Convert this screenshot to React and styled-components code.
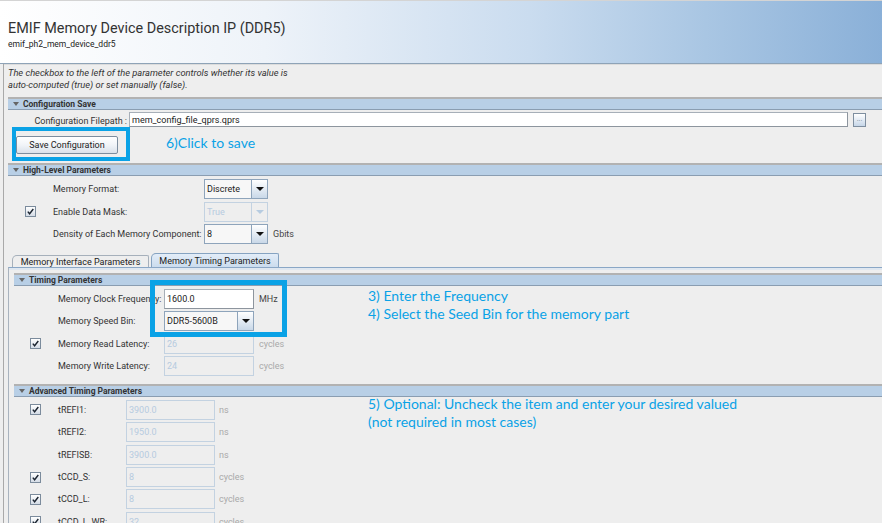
import React from 'react';
import styled, { createGlobalStyle } from 'styled-components';

const GlobalStyle = createGlobalStyle`
  html, body { margin: 0; padding: 0; }
  body {
    width: 882px;
    height: 523px;
    overflow: hidden;
    background: #eeeeee;
    font-family: Roboto, "Liberation Sans", sans-serif;
    color: #333333;
  }
`;

const ANNOT = '#0aa2e6';

const Page = styled.div`
  position: relative;
  width: 882px;
  height: 523px;
  overflow: hidden;
  background: #eeeeee;
`;

const Header = styled.div`
  height: 64px;
  box-sizing: border-box;
  border-top: 1px solid #d4d4d4;
  border-bottom: 1px solid #8ea3b7;
  background: linear-gradient(to right, #ffffff 0%, #eef3f9 30%, #cadcef 60%, #a9c6e3 80%, #8ab0d8 100%);
  padding: 19px 0 0 8px;
`;

const Title = styled.div`
  font-size: 14.4px;
  line-height: 18px;
  color: #333333;
`;

const Subtitle = styled.div`
  font-size: 8.5px;
  line-height: 12px;
  color: #222222;
`;

const Main = styled.div`
  margin-left: 3px;
  border-left: 1px solid #a9a9a9;
`;

const Description = styled.div`
  height: 33px;
  box-sizing: border-box;
  border-top: 1px solid #dcdcdc;
  padding: 2px 0 0 4px;
  font-size: 9.3px;
  line-height: 12px;
  font-style: italic;
  color: #333333;
`;

const Content = styled.div`
  padding-left: ${p => p.$indent || 4}px;
`;

const SectionBar = styled.div`
  display: flex;
  align-items: center;
  height: 10px;
  border-top: 2px solid #b2b2b2;
  border-bottom: 1px solid #8a9db1;
  background: #b8cfe6;
  padding-left: 5px;
  margin-top: ${p => p.$top || 0}px;
  font-size: 8.5px;
  font-weight: bold;
  color: #333333;
`;

const Caret = styled.span`
  width: 0;
  height: 0;
  border-left: 3px solid transparent;
  border-right: 3px solid transparent;
  border-top: 4px solid #666666;
  margin-right: 4px;
`;

const FileRow = styled.div`
  display: flex;
  align-items: center;
  height: 15px;
  margin-top: 2px;
  padding-right: 16px;
`;

const FileLabel = styled.div`
  width: 119px;
  text-align: right;
  font-size: 9px;
  padding-top: 3px;
`;

const TextField = styled.div`
  flex: ${p => (p.$grow ? 1 : 'none')};
  width: ${p => (p.$grow ? 'auto' : `${p.$w}px`)};
  height: ${p => p.$h || 20}px;
  box-sizing: border-box;
  margin-left: ${p => p.$ml || 0}px;
  background: #ffffff;
  border: 1px solid #a7afb8;
  border-right-color: #8d959e;
  border-bottom-color: #8d959e;
  font-size: 9px;
  display: flex;
  align-items: center;
  padding-left: 2px;
  color: #222222;
`;

const DotsButton = styled.div`
  width: 13px;
  height: 14px;
  margin-left: 5px;
  box-sizing: border-box;
  border: 1px solid #7e8e9f;
  background: linear-gradient(#ffffff, #c6d6e8);
  display: flex;
  align-items: flex-end;
  justify-content: center;
  font-size: 7px;
  line-height: 9px;
  color: #667788;
`;

const SaveButton = styled.div`
  width: 102px;
  height: 18px;
  margin: 9px 0 0 8px;
  box-sizing: border-box;
  border: 1px solid #7d8d9e;
  border-radius: 2px;
  background: linear-gradient(#ffffff 0%, #f1f4f8 50%, #d9e1ea 100%);
  display: flex;
  align-items: center;
  justify-content: center;
  font-size: 9px;
  color: #222222;
`;

const Rows = styled.div`
  display: flex;
  flex-direction: column;
  gap: ${p => p.$gap}px;
  padding-top: ${p => p.$pt}px;
`;

const Row = styled.div`
  display: grid;
  grid-template-columns: ${p => p.$check}px ${p => p.$label}px ${p => p.$ctrl}px auto;
  align-items: center;
  height: 20px;
`;

const CheckCell = styled.div`
  display: flex;
  padding-left: ${p => p.$pad}px;
`;

const CheckBox = styled.div`
  width: 11px;
  height: 11px;
  box-sizing: border-box;
  border: 1px solid #7b8b9c;
  background: linear-gradient(#ffffff, #d4dce6);
  display: flex;
  align-items: center;
  justify-content: center;
`;

const Label = styled.div`
  font-size: 9px;
  color: #333333;
  white-space: nowrap;
`;

const Unit = styled.div`
  font-size: 9px;
  margin-left: ${p => p.$ml}px;
  color: ${p => (p.$muted ? '#a9a9a9' : '#444444')};
`;

const Combo = styled.div`
  display: flex;
  height: 20px;
  box-sizing: border-box;
  border: 1px solid ${p => (p.$disabled ? '#c3d2e1' : '#8ea4bb')};
  background: ${p => (p.$disabled ? '#eeeeee' : '#f7f7f7')};
`;

const ComboText = styled.div`
  flex: 1;
  display: flex;
  align-items: center;
  padding-left: 2px;
  font-size: 9px;
  color: ${p => (p.$disabled ? '#b6cbe0' : '#222222')};
`;

const ComboArrow = styled.div`
  width: 15px;
  border-left: 1px solid ${p => (p.$disabled ? '#c3d2e1' : '#8ea4bb')};
  background: ${p => (p.$disabled ? '#eeeeee' : 'linear-gradient(#ffffff, #c9d8e8)')};
  display: flex;
  align-items: center;
  justify-content: center;
  &::after {
    content: '';
    border-left: 4px solid transparent;
    border-right: 4px solid transparent;
    border-top: 4px solid ${p => (p.$disabled ? '#b6cbe0' : '#111111')};
  }
`;

const DisabledField = styled.div`
  height: 20px;
  box-sizing: border-box;
  border: 1px solid #c3d2e1;
  display: flex;
  align-items: center;
  padding-left: 2px;
  font-size: 9px;
  color: #b6cbe0;
`;

const TabStrip = styled.div`
  display: flex;
  align-items: flex-end;
  height: 14px;
  margin-top: 9px;
  padding-left: 4px;
`;

const Tab = styled.div`
  height: ${p => (p.$active ? 14 : 12)}px;
  width: ${p => p.$w}px;
  box-sizing: border-box;
  margin-right: 2px;
  border: 1px solid ${p => (p.$active ? '#86a3c1' : '#a6b0bb')};
  border-bottom: none;
  border-radius: 5px 2px 0 0;
  background: ${p => (p.$active ? 'linear-gradient(#e3edf8, #cbdcee)' : '#eeeeee')};
  font-size: 9px;
  display: flex;
  align-items: center;
  justify-content: center;
  color: #222222;
`;

const TabPanel = styled.div`
  border-top: 1px solid #8aa7c6;
  border-left: 1px solid #a9b3be;
  box-shadow: inset 0 2px 0 #dfe7f0;
  padding: 5px 0 0 5px;
`;

const Note = styled.div`
  position: absolute;
  left: ${p => p.$x}px;
  top: ${p => p.$y}px;
  font-family: Lato, "Open Sans", sans-serif;
  font-size: 14px;
  line-height: 18px;
  color: ${ANNOT};
  white-space: nowrap;
`;

const Mark = styled.div`
  position: absolute;
  left: ${p => p.$x}px;
  top: ${p => p.$y}px;
  width: ${p => p.$w}px;
  height: ${p => p.$h}px;
  box-sizing: border-box;
  border: ${p => p.$b}px solid ${ANNOT};
`;

function Tick() {
  return (
    <svg width="7" height="7" viewBox="0 0 7 7">
      <path d="M0.8 3.6 L2.6 5.8 L6.3 1" stroke="#1b2430" strokeWidth="1.4" fill="none" />
    </svg>
  );
}

function Check({ on, pad }) {
  return <CheckCell $pad={pad}>{on && <CheckBox><Tick /></CheckBox>}</CheckCell>;
}

function ComboBox({ value, disabled }) {
  return (
    <Combo $disabled={disabled}>
      <ComboText $disabled={disabled}>{value}</ComboText>
      <ComboArrow $disabled={disabled} />
    </Combo>
  );
}

const highLevel = [
  { label: 'Memory Format:', value: 'Discrete' },
  { label: 'Enable Data Mask:', value: 'True', check: true, disabled: true },
  { label: 'Density of Each Memory Component:', value: '8', unit: 'Gbits' },
];

const advanced = [
  { label: 'tREFI1:', value: '3900.0', unit: 'ns', check: true },
  { label: 'tREFI2:', value: '1950.0', unit: 'ns' },
  { label: 'tREFISB:', value: '3900.0', unit: 'ns' },
  { label: 'tCCD_S:', value: '8', unit: 'cycles', check: true },
  { label: 'tCCD_L:', value: '8', unit: 'cycles', check: true },
  { label: 'tCCD_L_WR:', value: '32', unit: 'cycles', check: true },
];

export default function App() {
  return (
    <Page>
      <GlobalStyle />
      <Header>
        <Title>EMIF Memory Device Description IP (DDR5)</Title>
        <Subtitle>emif_ph2_mem_device_ddr5</Subtitle>
      </Header>
      <Main>
        <Description>
          The checkbox to the left of the parameter controls whether its value is
          <br />
          auto-computed (true) or set manually (false).
        </Description>
        <Content $indent={4}>
          <SectionBar>
            <Caret />
            Configuration Save
          </SectionBar>
          <FileRow>
            <FileLabel>Configuration Filepath :</FileLabel>
            <TextField $grow $h={15} $ml={2}>mem_config_file_qprs.qprs</TextField>
            <DotsButton>···</DotsButton>
          </FileRow>
          <SaveButton>Save Configuration</SaveButton>

          <SectionBar $top={9}>
            <Caret />
            High-Level Parameters
          </SectionBar>
          <Rows $gap={2.5} $pt={3}>
            {highLevel.map(r => (
              <Row key={r.label} $check={45} $label={151} $ctrl={64}>
                <Check on={r.check} pad={17} />
                <Label>{r.label}</Label>
                <ComboBox value={r.value} disabled={r.disabled} />
                {r.unit ? <Unit $ml={5}>{r.unit}</Unit> : <span />}
              </Row>
            ))}
          </Rows>

          <TabStrip>
            <Tab $w={137}>Memory Interface Parameters</Tab>
            <Tab $w={128} $active>Memory Timing Parameters</Tab>
          </TabStrip>
          <TabPanel>
            <SectionBar>
              <Caret />
              Timing Parameters
            </SectionBar>
            <Rows $gap={2.3} $pt={3}>
              <Row $check={44} $label={106} $ctrl={90}>
                <span />
                <Label>Memory Clock Frequency:</Label>
                <TextField $w={90}>1600.0</TextField>
                <Unit $ml={5}>MHz</Unit>
              </Row>
              <Row $check={44} $label={106} $ctrl={90}>
                <span />
                <Label>Memory Speed Bin:</Label>
                <ComboBox value="DDR5-5600B" />
                <span />
              </Row>
              <Row $check={44} $label={106} $ctrl={90}>
                <Check on pad={16} />
                <Label>Memory Read Latency:</Label>
                <DisabledField>26</DisabledField>
                <Unit $ml={5} $muted>cycles</Unit>
              </Row>
              <Row $check={44} $label={106} $ctrl={90}>
                <span />
                <Label>Memory Write Latency:</Label>
                <DisabledField>24</DisabledField>
                <Unit $ml={5} $muted>cycles</Unit>
              </Row>
            </Rows>

            <SectionBar $top={8}>
              <Caret />
              Advanced Timing Parameters
            </SectionBar>
            <Rows $gap={2.4} $pt={3}>
              {advanced.map(r => (
                <Row key={r.label} $check={44} $label={68} $ctrl={89}>
                  <Check on={r.check} pad={16} />
                  <Label>{r.label}</Label>
                  <DisabledField>{r.value}</DisabledField>
                  <Unit $ml={4} $muted>{r.unit}</Unit>
                </Row>
              ))}
            </Rows>
          </TabPanel>
        </Content>
      </Main>

      <Mark $x={12} $y={127} $w={118} $h={34} $b={4} />
      <Mark $x={150} $y={280} $w={137} $h={57} $b={5} />
      <Note $x={166} $y={134}>6)Click to save</Note>
      <Note $x={368} $y={287}>
        3) Enter the Frequency
        <br />
        4) Select the Seed Bin for the memory part
      </Note>
      <Note $x={368} $y={395}>
        5) Optional: Uncheck the item and enter your desired valued
        <br />
        (not required in most cases)
      </Note>
    </Page>
  );
}
